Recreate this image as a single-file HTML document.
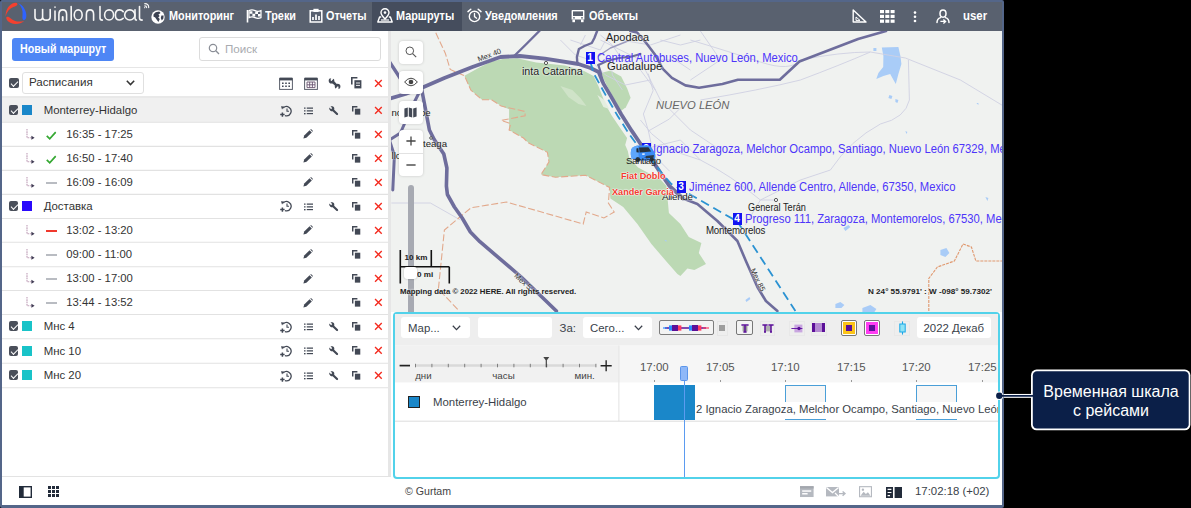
<!DOCTYPE html>
<html lang="ru">
<head>
<meta charset="utf-8">
<title>Wialon Local - Маршруты</title>
<style>
*{box-sizing:border-box;margin:0;padding:0}
html,body{width:1191px;height:508px;overflow:hidden;background:#000;font-family:"Liberation Sans",sans-serif;}
#stage{position:absolute;left:0;top:0;width:1191px;height:508px;overflow:hidden;background:#000}
#win{position:absolute;left:0;top:0;width:1004px;height:508px;border:2px solid #546689;border-bottom-width:3px;border-radius:2px;background:#fff;overflow:hidden}
/* inner coordinates are relative to #in which is placed so that its origin equals page origin */
#in{position:absolute;left:-2px;top:-2px;width:1004px;height:508px}
.a{position:absolute}
.t{position:absolute;white-space:nowrap;font-size:12px;line-height:14px;color:#333;transform-origin:0 50%}
.b{font-weight:bold}
svg{position:absolute;overflow:visible}
/* top bar */
#top{left:0;top:0;width:1004px;height:31px;background:#59616f}
#top .t{color:#fff;font-weight:bold;top:9px}
#tabact{left:372px;top:0;width:90px;height:31px;background:#454d5d}
/* left panel */
#lp{left:0;top:31px;width:388px;height:446px;background:#fff}
.row{position:absolute;left:0;width:388px;border-top:1px solid #e4e4e4}
.cb{position:absolute;width:11px;height:11px;border-radius:2px;background:#4a4f5a}
.cb:after{content:"";position:absolute;left:2.2px;top:3px;width:6px;height:3px;border-left:1.6px solid #fff;border-bottom:1.6px solid #fff;transform:rotate(-45deg);transform-origin:50% 50%}
.sq{position:absolute;width:11px;height:11px}
</style>
</head>
<body>
<div id="stage">
<div id="win"><div id="in">

<!-- TOPBAR -->
<div id="top" class="a">
  <div id="tabact" class="a"></div>
  <!-- logo mark -->
  <svg style="left:0;top:0" width="32" height="30" viewBox="0 0 32 30">
    <path d="M17.3 3.8 C16.8 2.3 14.6 2.4 12.4 3.5 C8.2 5.7 5.2 10.8 5.7 16.8 C6.4 12.3 9.4 8.6 13.4 7 C15.6 6.3 17.9 5.5 17.3 3.8 Z" fill="#f4402f"/>
    <path d="M6.6 17 C7.5 16.3 9.2 16.9 10.8 18.5 C13.8 21.1 18.6 22.6 24.2 20.9 C20.8 24 15 24.9 10.3 22.7 C7.4 21.3 5.5 18.4 6.6 17 Z" fill="#f4402f"/>
    <path d="M24.4 20.1 C25.9 19.7 26.5 17.4 26.3 14.6 C25.9 9.9 22.8 5.3 18.2 3.1 C21.6 6.6 23.1 10.6 22.5 15.4 C22.1 17.8 22.6 20.5 24.4 20.1 Z" fill="#2f63ff"/>
  </svg>
  <!-- logo text: wialon local -->
  <svg style="left:30px;top:2px" width="125" height="24" viewBox="30 2 125 24" fill="none" stroke="#f6f6f6" stroke-width="1.6" stroke-linecap="round" stroke-linejoin="round">
    <path d="M35 9.6 V17 Q35 20.1 38.8 20.1 Q42.6 20.1 42.6 17 V9.6 M42.6 17 Q42.6 20.1 46.4 20.1 Q50.2 20.1 50.2 17 V9.6"/>
    <path d="M55 11 V20.3 M55 7.1 V7.3"/>
    <path d="M58.9 20.3 V14.5 Q58.9 9.85 62.8 9.85 Q66.6 9.85 66.6 14.5 V20.3"/><path d="M62.7 17 V20.3" stroke-width="1.9"/>
    <path d="M71.2 6.5 V20.3"/>
    <ellipse cx="78.2" cy="14.95" rx="3.95" ry="5.1"/>
    <path d="M86.4 20.3 V14.3 Q86.4 9.85 90 9.85 Q93.6 9.85 93.6 14.3 V20.3"/>
    <path d="M100 6.5 V18 Q100 20.1 102.4 20.1"/>
    <ellipse cx="109.1" cy="14.95" rx="4.5" ry="5.1"/>
    <path d="M123.2 11.6 Q121.6 9.85 119.6 9.85 Q115.4 9.85 115.4 14.95 Q115.4 20.05 119.6 20.05 Q121.6 20.05 123.2 18.3"/>
    <ellipse cx="129.8" cy="14.95" rx="5.1" ry="5.1"/><path d="M135 9.8 V18.3 Q135 20.1 136.4 20.1"/>
    <path d="M139.5 6.5 V18 Q139.5 20.1 142.2 20.1"/>
    <path d="M144.8 3.7 Q148.7 3.7 148.7 7.6 M144.8 5.9 Q146.6 5.9 146.6 7.6 M144.7 7.5 V7.7" stroke-width="1.2"/>
  </svg>
  <!-- globe -->
  <svg style="left:150.5px;top:9.5px" width="14" height="14" viewBox="0 0 14 14">
    <circle cx="7" cy="7" r="6.7" fill="#fff"/>
    <path d="M4.6 2.2 L8.2 1.4 L9.6 3 L7.4 4.4 L8.6 6 L7.2 7.6 L8.8 9 L7.4 12 L5.6 9.4 L4.2 7.6 L2.4 6.4 L2.6 4.2 Z M10.4 5.4 L12.6 5.6 L12.4 8.6 L10.8 10.4 L9.8 8 Z" fill="#3b4252"/>
  </svg>
  <div class="t" style="left:168.5px;transform:scaleX(.905)">Мониторинг</div>
  <!-- flag -->
  <svg style="left:246px;top:9px" width="16" height="14" viewBox="0 0 16 14">
    <path d="M1.5 1 V13.5" stroke="#fff" stroke-width="1.6" fill="none"/>
    <path d="M3 1.6 Q6 0.2 9 1.6 T15 1.6 V8.6 Q12 10 9 8.6 T3 8.6 Z" fill="none" stroke="#fff" stroke-width="1.2"/>
    <path d="M3.6 2.2 h2.8 v2.6 h-2.8z M9.2 2.4 h2.8 v2.6 h-2.8z M6.4 4.8 h2.8 v2.6 h-2.8z M12 5 h2.6 v2.6 h-2.6z" fill="#fff"/>
  </svg>
  <div class="t" style="left:265px;transform:scaleX(.905)">Треки</div>
  <!-- report -->
  <svg style="left:309px;top:8px" width="14" height="15" viewBox="0 0 14 15">
    <rect x="1.2" y="2.8" width="11.6" height="11.2" fill="none" stroke="#fff" stroke-width="1.5"/>
    <rect x="4.4" y="0.8" width="5.2" height="3.2" fill="#fff"/>
    <path d="M4 12 V9 M7 12 V6.6 M10 12 V8" stroke="#fff" stroke-width="1.7" fill="none"/>
  </svg>
  <div class="t" style="left:326px;transform:scaleX(.905)">Отчеты</div>
  <!-- routes -->
  <svg style="left:377px;top:8px" width="16" height="15" viewBox="0 0 16 15">
    <path d="M8 0.8 C5.6 0.8 4 2.6 4 4.6 C4 7 8 11 8 11 C8 11 12 7 12 4.6 C12 2.6 10.4 0.8 8 0.8 Z" fill="none" stroke="#fff" stroke-width="1.4"/>
    <circle cx="8" cy="4.6" r="1.3" fill="#fff"/>
    <path d="M4.2 9 L2.6 9 L0.8 14 H15.2 L13.4 9 L11.8 9" fill="none" stroke="#fff" stroke-width="1.4" stroke-linejoin="round"/>
    <path d="M4 12 h8" stroke="#fff" stroke-width="1.2"/>
  </svg>
  <div class="t" style="left:396px;transform:scaleX(.905)">Маршруты</div>
  <!-- alarm clock -->
  <svg style="left:467px;top:8px" width="15" height="15" viewBox="0 0 15 15">
    <circle cx="7.5" cy="8.4" r="5.2" fill="none" stroke="#fff" stroke-width="1.4"/>
    <path d="M7.5 5.4 V8.6 L9.6 10.2" fill="none" stroke="#fff" stroke-width="1.3" stroke-linecap="round"/>
    <path d="M1 3.6 L3.8 1.2 M14 3.6 L11.2 1.2" stroke="#fff" stroke-width="1.5" stroke-linecap="round"/>
  </svg>
  <div class="t" style="left:485px;transform:scaleX(.905)">Уведомления</div>
  <!-- bus -->
  <svg style="left:571px;top:9px" width="14" height="14" viewBox="0 0 14 14">
    <path d="M1.4 1 H12.6 Q13.4 1 13.4 1.8 V10.6 H0.6 V1.8 Q0.6 1 1.4 1 Z" fill="#fff"/>
    <rect x="2" y="2.4" width="10" height="4.6" fill="#59616f"/>
    <rect x="1.4" y="10.6" width="2.6" height="2.6" fill="#fff"/><rect x="10" y="10.6" width="2.6" height="2.6" fill="#fff"/>
    <circle cx="3" cy="8.8" r="0.9" fill="#59616f"/><circle cx="11" cy="8.8" r="0.9" fill="#59616f"/>
  </svg>
  <div class="t" style="left:589px;transform:scaleX(.905)">Объекты</div>
  <!-- right icons -->
  <svg style="left:852px;top:9px" width="15" height="14" viewBox="0 0 15 14">
    <path d="M1.2 1 L14 13 H1.2 Z" fill="none" stroke="#fff" stroke-width="1.4" stroke-linejoin="round"/>
    <path d="M4 8 L8 11.4 H4 Z" fill="none" stroke="#fff" stroke-width="1"/>
  </svg>
  <svg style="left:880px;top:10px" width="15" height="13" viewBox="0 0 15 13" fill="#fff">
    <rect x="0" y="0" width="4" height="3.2"/><rect x="5.3" y="0" width="4" height="3.2"/><rect x="10.6" y="0" width="4" height="3.2"/>
    <rect x="0" y="4.8" width="4" height="3.2"/><rect x="5.3" y="4.8" width="4" height="3.2"/><rect x="10.6" y="4.8" width="4" height="3.2"/>
    <rect x="0" y="9.6" width="4" height="3.2"/><rect x="5.3" y="9.6" width="4" height="3.2"/><rect x="10.6" y="9.6" width="4" height="3.2"/>
  </svg>
  <svg style="left:913px;top:11px" width="4" height="12" viewBox="0 0 4 12" fill="#fff"><circle cx="2" cy="1.6" r="1.3"/><circle cx="2" cy="5.8" r="1.3"/><circle cx="2" cy="10" r="1.3"/></svg>
  <svg style="left:935px;top:9px" width="16" height="15" viewBox="0 0 16 15">
    <ellipse cx="8" cy="4.6" rx="3" ry="3.6" fill="none" stroke="#fff" stroke-width="1.5"/>
    <path d="M2 13.6 Q2 9.6 5.6 8.6 M14 13.6 Q14 9.6 10.4 8.6" fill="none" stroke="#fff" stroke-width="1.5" stroke-linecap="round"/>
    <path d="M5.4 12.4 H10 M8.4 10.4 L10.6 12.4 L8.4 14.4" fill="none" stroke="#fff" stroke-width="1.3"/>
  </svg>
  <div class="t" style="left:963px;transform:scaleX(.95)">user</div>
</div>

<!-- LEFT PANEL -->
<svg width="0" height="0" style="position:absolute">
<defs>
<symbol id="i-x" viewBox="0 0 10 10"><path d="M1.2 1.2 L8.8 8.8 M8.8 1.2 L1.2 8.8" stroke="#f42c20" stroke-width="1.6" fill="none"/></symbol>
<symbol id="i-copy" viewBox="0 0 10 10"><path d="M0.8 6.2 V0.8 H6" fill="none" stroke="#434955" stroke-width="1.6"/><rect x="3.2" y="3" width="6" height="6.6" fill="#434955"/></symbol>
<symbol id="i-wr" viewBox="0 0 10 10"><path d="M9.2 7.6 L5.4 3.8 C5.8 2.6 5.4 1.3 4.2 0.6 C3.4 0.1 2.4 0.1 1.6 0.4 L3.4 2.2 L2.2 3.4 L0.4 1.6 C0.1 2.6 0.3 3.8 1.2 4.6 C2 5.4 3 5.6 3.8 5.4 L7.6 9.2 C8.1 9.7 8.8 9.7 9.2 9.2 C9.7 8.8 9.7 8.1 9.2 7.6 Z" fill="#434955"/></symbol>
<symbol id="i-list" viewBox="0 0 11 9"><path d="M3.4 1.1 H11 M3.4 4.5 H11 M3.4 7.9 H11" stroke="#434955" stroke-width="1.5" fill="none"/><path d="M0 1.1 H1.9 M0 4.5 H1.9 M0 7.9 H1.9" stroke="#434955" stroke-width="1.7" fill="none"/></symbol>
<symbol id="i-clk" viewBox="0 0 12 12"><path d="M3.2 3 A4.6 4.6 0 1 1 5 10.6" fill="none" stroke="#434955" stroke-width="1.25"/><path d="M7 3.4 V6.2 H9" fill="none" stroke="#434955" stroke-width="1.1"/><path d="M1 1.2 L4.2 1.6 L2 4.4 Z" fill="#434955"/><path d="M2.4 7.4 V11.8 M0.2 9.6 H4.6" stroke="#434955" stroke-width="1.5" fill="none"/></symbol>
<symbol id="i-pen" viewBox="0 0 10 10"><path d="M0.4 9.6 L1.2 6.6 L6.6 1.2 L8.8 3.4 L3.4 8.8 Z" fill="#434955"/><path d="M7.3 0.6 L8 0 L10 2 L9.4 2.7 Z" fill="#434955"/></symbol>
<symbol id="i-arr" viewBox="0 0 9 11"><path d="M1 0 V8.7 H6.4" fill="none" stroke="#c2a3bb" stroke-width="1.15" stroke-dasharray="1.6 0.7"/><path d="M5.4 6.7 L8.6 8.7 L5.4 10.7 Z" fill="#3f3a52"/></symbol>
<symbol id="i-chk" viewBox="0 0 11 9"><path d="M0.8 4.8 L3.9 7.9 L10.2 0.9" fill="none" stroke="#35a832" stroke-width="1.8"/></symbol>
<symbol id="i-cal1" viewBox="0 0 14 13"><rect x="0.6" y="1.6" width="12.8" height="10.8" fill="#fff" stroke="#5a5f6b" stroke-width="1"/><rect x="0.6" y="0.6" width="12.8" height="2.8" fill="#434955"/><path d="M3 5.6h1.6v1.4H3z M6.2 5.6h1.6v1.4H6.2z M9.4 5.6h1.6v1.4H9.4z M3 8.6h1.6v1.4H3z M6.2 8.6h1.6v1.4H6.2z M9.4 8.6h1.6v1.4H9.4z" fill="#434955"/></symbol>
<symbol id="i-cal2" viewBox="0 0 14 13"><rect x="0.6" y="1.6" width="12.8" height="10.8" fill="#fff" stroke="#5a5f6b" stroke-width="1"/><rect x="0.6" y="0.6" width="12.8" height="2.8" fill="#434955"/><path d="M3 5 H11 V10.6 H3 Z M3 7.8 H11 M5.7 5 V10.6 M8.4 5 V10.6" fill="none" stroke="#6a5570" stroke-width="0.9"/></symbol>
<symbol id="i-wr2" viewBox="0 0 13 13"><path d="M4 4 L9.2 9.2" stroke="#434955" stroke-width="2.5" fill="none"/><circle cx="3.5" cy="3.7" r="2.8" fill="#434955"/><path d="M3.3 3.4 L3.2 -0.5 L6.2 0.2 Z" fill="#fff" stroke="#fff" stroke-width="1.1" stroke-linejoin="round"/><circle cx="9.6" cy="9.5" r="2.8" fill="#434955"/><path d="M9.9 9.8 L10 13.6 L7 13 Z" fill="#fff" stroke="#fff" stroke-width="1.1" stroke-linejoin="round"/></symbol>
<symbol id="i-copy2" viewBox="0 0 11 12"><path d="M0.8 7.4 V0.8 H6.4" fill="none" stroke="#434955" stroke-width="1.6"/><rect x="3.4" y="3.2" width="7" height="8.2" fill="#434955"/><path d="M5 6 H9 M5 8.4 H9" stroke="#fff" stroke-width="0.9"/></symbol>
</defs></svg>
<div id="lp" class="a"></div>
<div class="a" style="left:12px;top:38px;width:102px;height:22.5px;background:#4e86f5;border-radius:3px"></div>
<div class="t b" style="left:20px;top:42px;color:#fff;transform:scaleX(.89)">Новый маршрут</div>
<div class="a" style="left:199px;top:37px;width:181.5px;height:24px;border:1px solid #dcdcdc;border-radius:3px;background:#fff"></div>
<svg style="left:208px;top:43px" width="12" height="12" viewBox="0 0 12 12"><circle cx="5" cy="5" r="3.7" fill="none" stroke="#8a8e96" stroke-width="1.2"/><path d="M7.8 7.8 L11 11" stroke="#8a8e96" stroke-width="1.3"/></svg>
<div class="t" style="left:225px;top:42px;color:#a9abb0;font-size:11.6px">Поиск</div>
<div class="a" style="left:0;top:66.8px;width:388px;height:1px;background:#e6e6e6"></div>
<div class="cb" style="left:8.5px;top:77.5px;width:10px;height:10px"></div>
<div class="a" style="left:22px;top:72px;width:121.7px;height:21.6px;border:1px solid #e0e0e0;border-radius:3px;background:#fff"></div>
<div class="t" style="left:29px;top:75.3px;font-size:11.6px">Расписания</div>
<svg style="left:125.5px;top:79.5px" width="9" height="6" viewBox="0 0 9 6"><path d="M0.8 0.8 L4.5 4.6 L8.2 0.8" fill="none" stroke="#333" stroke-width="1.5"/></svg>
<svg style="left:279px;top:76.5px" width="14" height="13"><use href="#i-cal1"/></svg>
<svg style="left:303.5px;top:76.5px" width="14" height="13"><use href="#i-cal2"/></svg>
<svg style="left:328px;top:76.5px" width="13" height="13"><use href="#i-wr2"/></svg>
<svg style="left:351.3px;top:77px" width="11" height="12"><use href="#i-copy2"/></svg>
<svg style="left:373.6px;top:78.5px" width="8.8" height="8.8"><use href="#i-x"/></svg>
<svg style="left:0;top:0" width="388" height="400" viewBox="0 0 388 400"><rect x="0" y="96.9" width="388" height="25.3" fill="#f0f0f0"/><path d="M0 96.9 H388" stroke="#e2e2e2" stroke-width="1.1"/><path d="M0 122.2 H388" stroke="#e2e2e2" stroke-width="1.1"/><path d="M0 146.4 H388" stroke="#e2e2e2" stroke-width="1.1"/><path d="M0 170.4 H388" stroke="#e2e2e2" stroke-width="1.1"/><path d="M0 194.4 H388" stroke="#e2e2e2" stroke-width="1.1"/><path d="M0 218.5 H388" stroke="#e2e2e2" stroke-width="1.1"/><path d="M0 242.2 H388" stroke="#e2e2e2" stroke-width="1.1"/><path d="M0 266.7 H388" stroke="#e2e2e2" stroke-width="1.1"/><path d="M0 290.5 H388" stroke="#e2e2e2" stroke-width="1.1"/><path d="M0 314.5 H388" stroke="#e2e2e2" stroke-width="1.1"/><path d="M0 338.8 H388" stroke="#e2e2e2" stroke-width="1.1"/><path d="M0 363.3 H388" stroke="#e2e2e2" stroke-width="1.1"/><path d="M0 387.7 H388" stroke="#e2e2e2" stroke-width="1.1"/></svg>
<div class="cb" style="left:8.5px;top:105.4px;width:9.8px;height:9.8px"></div>
<div class="sq" style="left:22.3px;top:105.4px;width:10.2px;height:9.8px;background:#1a87c9"></div>
<div class="t" style="left:43.7px;top:103px;font-size:11.4px">Monterrey-Hidalgo</div>
<svg style="left:280.3px;top:104.5px" width="12" height="12"><use href="#i-clk"/></svg>
<svg style="left:304.4px;top:106.6px" width="9" height="7.8"><use href="#i-list"/></svg>
<svg style="left:329.2px;top:105.7px" width="9.6" height="9.6"><use href="#i-wr"/></svg>
<svg style="left:352px;top:105.9px" width="9" height="9"><use href="#i-copy"/></svg>
<svg style="left:373.6px;top:105.9px" width="8.8" height="8.8"><use href="#i-x"/></svg>
<svg style="left:26px;top:128.8px" width="9" height="11"><use href="#i-arr"/></svg>
<svg style="left:46.2px;top:130.7px" width="10.5" height="9"><use href="#i-chk"/></svg>
<div class="t" style="left:66.3px;top:126.5px;font-size:11.3px">16:35 - 17:25</div>
<svg style="left:303px;top:129.3px" width="10" height="10"><use href="#i-pen"/></svg>
<svg style="left:352px;top:129.7px" width="9" height="9"><use href="#i-copy"/></svg>
<svg style="left:373.6px;top:129.7px" width="8.8" height="8.8"><use href="#i-x"/></svg>
<svg style="left:26px;top:152.9px" width="9" height="11"><use href="#i-arr"/></svg>
<svg style="left:46.2px;top:154.8px" width="10.5" height="9"><use href="#i-chk"/></svg>
<div class="t" style="left:66.3px;top:150.6px;font-size:11.3px">16:50 - 17:40</div>
<svg style="left:303px;top:153.4px" width="10" height="10"><use href="#i-pen"/></svg>
<svg style="left:352px;top:153.8px" width="9" height="9"><use href="#i-copy"/></svg>
<svg style="left:373.6px;top:153.8px" width="8.8" height="8.8"><use href="#i-x"/></svg>
<svg style="left:26px;top:176.9px" width="9" height="11"><use href="#i-arr"/></svg>
<div class="a" style="left:46.2px;top:181.7px;width:10.6px;height:2.2px;background:#b9bcc2"></div>
<div class="t" style="left:66.3px;top:174.6px;font-size:11.3px">16:09 - 16:09</div>
<svg style="left:303px;top:177.4px" width="10" height="10"><use href="#i-pen"/></svg>
<svg style="left:352px;top:177.8px" width="9" height="9"><use href="#i-copy"/></svg>
<svg style="left:373.6px;top:177.8px" width="8.8" height="8.8"><use href="#i-x"/></svg>
<div class="cb" style="left:8.5px;top:201.2px;width:9.8px;height:9.8px"></div>
<div class="sq" style="left:22.3px;top:201.2px;width:10.2px;height:9.8px;background:#2a0afc"></div>
<div class="t" style="left:43.7px;top:198.9px;font-size:11.4px">Доставка</div>
<svg style="left:280.3px;top:200.4px" width="12" height="12"><use href="#i-clk"/></svg>
<svg style="left:304.4px;top:202.5px" width="9" height="7.8"><use href="#i-list"/></svg>
<svg style="left:329.2px;top:201.6px" width="9.6" height="9.6"><use href="#i-wr"/></svg>
<svg style="left:352px;top:201.8px" width="9" height="9"><use href="#i-copy"/></svg>
<svg style="left:373.6px;top:201.8px" width="8.8" height="8.8"><use href="#i-x"/></svg>
<svg style="left:26px;top:224.8px" width="9" height="11"><use href="#i-arr"/></svg>
<div class="a" style="left:46.2px;top:229.7px;width:10.6px;height:2.2px;background:#f0392d"></div>
<div class="t" style="left:66.3px;top:222.5px;font-size:11.3px">13:02 - 13:20</div>
<svg style="left:303px;top:225.3px" width="10" height="10"><use href="#i-pen"/></svg>
<svg style="left:352px;top:225.8px" width="9" height="9"><use href="#i-copy"/></svg>
<svg style="left:373.6px;top:225.8px" width="8.8" height="8.8"><use href="#i-x"/></svg>
<svg style="left:26px;top:248.9px" width="9" height="11"><use href="#i-arr"/></svg>
<div class="a" style="left:46.2px;top:253.8px;width:10.6px;height:2.2px;background:#b9bcc2"></div>
<div class="t" style="left:66.3px;top:246.6px;font-size:11.3px">09:00 - 11:00</div>
<svg style="left:303px;top:249.4px" width="10" height="10"><use href="#i-pen"/></svg>
<svg style="left:352px;top:249.8px" width="9" height="9"><use href="#i-copy"/></svg>
<svg style="left:373.6px;top:249.8px" width="8.8" height="8.8"><use href="#i-x"/></svg>
<svg style="left:26px;top:273.1px" width="9" height="11"><use href="#i-arr"/></svg>
<div class="a" style="left:46.2px;top:277.9px;width:10.6px;height:2.2px;background:#b9bcc2"></div>
<div class="t" style="left:66.3px;top:270.8px;font-size:11.3px">13:00 - 17:00</div>
<svg style="left:303px;top:273.6px" width="10" height="10"><use href="#i-pen"/></svg>
<svg style="left:352px;top:274.0px" width="9" height="9"><use href="#i-copy"/></svg>
<svg style="left:373.6px;top:274.0px" width="8.8" height="8.8"><use href="#i-x"/></svg>
<svg style="left:26px;top:297.0px" width="9" height="11"><use href="#i-arr"/></svg>
<div class="a" style="left:46.2px;top:301.8px;width:10.6px;height:2.2px;background:#b9bcc2"></div>
<div class="t" style="left:66.3px;top:294.7px;font-size:11.3px">13:44 - 13:52</div>
<svg style="left:303px;top:297.5px" width="10" height="10"><use href="#i-pen"/></svg>
<svg style="left:352px;top:297.9px" width="9" height="9"><use href="#i-copy"/></svg>
<svg style="left:373.6px;top:297.9px" width="8.8" height="8.8"><use href="#i-x"/></svg>
<div class="cb" style="left:8.5px;top:321.4px;width:9.8px;height:9.8px"></div>
<div class="sq" style="left:22.3px;top:321.4px;width:10.2px;height:9.8px;background:#19c3c8"></div>
<div class="t" style="left:43.7px;top:319.1px;font-size:11.4px">Мнс 4</div>
<svg style="left:280.3px;top:320.6px" width="12" height="12"><use href="#i-clk"/></svg>
<svg style="left:304.4px;top:322.8px" width="9" height="7.8"><use href="#i-list"/></svg>
<svg style="left:329.2px;top:321.8px" width="9.6" height="9.6"><use href="#i-wr"/></svg>
<svg style="left:352px;top:322.0px" width="9" height="9"><use href="#i-copy"/></svg>
<svg style="left:373.6px;top:322.0px" width="8.8" height="8.8"><use href="#i-x"/></svg>
<div class="cb" style="left:8.5px;top:345.9px;width:9.8px;height:9.8px"></div>
<div class="sq" style="left:22.3px;top:345.9px;width:10.2px;height:9.8px;background:#19c3c8"></div>
<div class="t" style="left:43.7px;top:343.6px;font-size:11.4px">Мнс 10</div>
<svg style="left:280.3px;top:345.1px" width="12" height="12"><use href="#i-clk"/></svg>
<svg style="left:304.4px;top:347.2px" width="9" height="7.8"><use href="#i-list"/></svg>
<svg style="left:329.2px;top:346.2px" width="9.6" height="9.6"><use href="#i-wr"/></svg>
<svg style="left:352px;top:346.4px" width="9" height="9"><use href="#i-copy"/></svg>
<svg style="left:373.6px;top:346.4px" width="8.8" height="8.8"><use href="#i-x"/></svg>
<div class="cb" style="left:8.5px;top:370.3px;width:9.8px;height:9.8px"></div>
<div class="sq" style="left:22.3px;top:370.3px;width:10.2px;height:9.8px;background:#19c3c8"></div>
<div class="t" style="left:43.7px;top:368.0px;font-size:11.4px">Мнс 20</div>
<svg style="left:280.3px;top:369.5px" width="12" height="12"><use href="#i-clk"/></svg>
<svg style="left:304.4px;top:371.6px" width="9" height="7.8"><use href="#i-list"/></svg>
<svg style="left:329.2px;top:370.7px" width="9.6" height="9.6"><use href="#i-wr"/></svg>
<svg style="left:352px;top:370.9px" width="9" height="9"><use href="#i-copy"/></svg>
<svg style="left:373.6px;top:370.9px" width="8.8" height="8.8"><use href="#i-x"/></svg>
<div class="a" style="left:388px;top:31px;width:2.6px;height:446px;background:#e6e6e6"></div>

<!-- MAP -->
<div id="map" class="a" style="left:390.6px;top:31px;width:613px;height:281px;background:#f0f2f0;overflow:hidden">
<svg style="left:0;top:0" width="613" height="281" viewBox="390.6 31 613 281">
  <!-- green areas -->
  <path d="M464.1 75.8 L478 68 L491.2 61.5 L502.4 58.9 L516.7 58.3 L535.8 62.4 L564.5 65.6 L583.6 71 L593.2 76 L598 86 L605.4 104.9 L611.3 115.5 L618.4 126.1 L626.7 138 L624.8 145 L627.4 151 L628.8 157.7 L637.7 167.4 L648 173 L657 176 L666 186 L668.5 213 L680 224 L688.4 237 L701 243 L698.4 253 L705.6 264 L694 270 L687 268.5 L680 276 L677 274 L665.6 261 L651 244 L637 224 L622.8 207 L610 198.5 L609.2 187.4 L585.2 175.3 L555 177.2 L540.6 174.6 L548.6 161.9 L547 152.3 L527.9 142.8 L523.1 138 L508.7 130 L508.7 109.3 L500.8 106.1 L491.2 99.7 L481.6 99.7 L470.5 90.2 Z" fill="#bcd9b4"/>
  <path d="M600.7 73 L610 70.6 L620.8 76.5 L626.7 88.3 L630.2 97.8 L625.5 107.2 L620.8 110.8 L613.7 99 L605.4 83.6 Z" fill="#bcd9b4"/>
  <path d="M560 86 L572 90 L580 98 L586 106 L578 104 L568 97 Z" fill="#cfe3c8"/>
  <path d="M597 95 L604 100 L609 109 L603 107 Z" fill="#e4eee0"/>
  <!-- water -->
  <path d="M881.4 47.6 L898 47 L900 56 L901 64 L898 74 L895.4 84 L892 78 L889.8 74 L883 76 L875.9 79 L878 73 L882.8 67 L883 56 Z" fill="#a9ccf7"/>
  <path d="M889 95 l3 1 l-1 3 l-3 -1z M895 99 l3 1 l-1 3 l-2 -1z M873 48 l3 0 l0 3 l-3 0z M905 131 l2 1 l-1 2z M976 103 l2 0 l0 2z" fill="#a9ccf7"/>
  <path d="M940 250 l6 -2 l3 5 l-4 4 l-5 -2z M843 228 l5 -3 l2 2 l-5 4z M664 240 l2 0 l0 2z M745 300 l4 -3 l1 2 l-4 3z M985 197 l3 1 l-1 3z M835 304 l5 -2 l4 3 l-3 3 l-6 0z M862 308 l8 -3 l6 4 l-2 3 l-12 0z" fill="#a9ccf7"/>
  <!-- thin roads -->
  <g fill="none" stroke="#cfd0e2" stroke-width="0.9">
    <path d="M690 40 Q730 52 760 62 T800 60 Q840 52 870 52 L905 58 L960 80 L1003 106"/>
    <path d="M700 100 Q760 90 800 80 Q840 65 870 52"/>
    <path d="M908 60 L909 100 Q905 118 880 124 Q850 140 830 170"/>
    <path d="M640 120 Q660 150 700 160 Q730 175 760 200 L775 200"/>
    <path d="M700 31 L720 60 L690 80"/>
    <path d="M600 40 L640 60 L660 100 L690 130 L720 150"/>
    <path d="M760 200 L800 180 L830 170"/>
    <path d="M760 200 L745 225"/>
    <path d="M391 203 L430 203 L460 220"/>
    <path d="M620 40 L650 45 L680 35"/>
    <path d="M570 40 L600 50 L610 31"/><path d="M560 40 L575 55 L590 60 L605 75 L625 85 L650 80"/><path d="M600 35 L612 45 L622 60 L640 70 L655 90"/><path d="M585 35 L580 45 M610 60 L612 75 L622 90 M660 40 L680 45 L700 40 M655 60 L675 60 L690 70"/>
    <path d="M640 150 L680 140 L700 160"/>
  </g>
  <!-- state boundary -->
  <g fill="none" stroke="#e2a98c" stroke-width="1.1" stroke-dasharray="7 2.5">
    <path d="M435.4 32.8 L445 53.5 L449.8 69.4 L464.1 75.8 L470.5 90.2 L481.6 99.7 L491.2 99.7 L500.8 106.1 L524.7 111.5 L524.7 115.7 L500.8 120.4 L510.3 123.6 L508.7 130 L523.1 138 L527.9 142.8 L547 152.3 L548.6 161.9 L540.6 174.6 L555 177.2 L585.2 175.3 L609.2 187.4 L608 203 L613.8 212 L603.5 218 L585.8 212 L582.8 224 L506 202 L470.6 207.8 L444 230 L438 289 L458.8 311"/>
  </g>
  <path d="M928.4 311 L928.4 278.5 L937 267 L954 261 L962.6 244 L971 247 L975.5 261 L1003 261" fill="none" stroke="#e0986e" stroke-width="1.1" stroke-dasharray="3 1"/>
  <!-- main roads -->
  <g fill="none" stroke="#6e6d9c" stroke-width="3" stroke-linejoin="round" stroke-linecap="round">
    <path d="M388 99 L405 94 L421 88 L444 78 L472 67 L500 57 L519.4 56 L544.5 58.7 L578 64 L590 68 L598.3 72 L603 83.6 L610 95.4 L620.8 114.3 L631.4 130.9 L640.9 145 L652.7 161.6 L662 175.8 L669 186 L682.7 198.5" stroke-width="3.8"/>
    <path d="M682.7 198.5 L697 204 L717 221 L737 241 L745.5 261 L757 287 L765.5 301 L777 311" stroke-width="2.6"/>
    <path d="M539 31 L526 44 L513.8 56" stroke-width="2.4"/>
    <path d="M596.7 31 L594 38 L591.4 43 L584 46 L578.5 49 L576.5 57 L577 64" stroke-width="2.4"/><path d="M598 65 L606.5 61 L618.6 58 L630.7 56.7 L640 54" stroke-width="2.2"/><path d="M598 65 L600.5 73 L601.5 82" stroke-width="2.2"/>
    <path d="M630 31 L636.7 32.5 L645.8 43 L654.9 55 L662.4 68.8 L671.5 77.9 L685 85.4 L698.7 87.7 L722 84 L737.5 79.7 L779.4 79.7 L799 61.5 L857.7 39 L885.6 31" stroke-width="2.6"/><path d="M598 56 L610 48 L625 42 L637 37" stroke-width="1.4" stroke="#9a99bd"/>
    
    <path d="M388 60 L400.3 79 L421 88" stroke-width="3.4"/>
    <path d="M421 88 L424.2 104.5 L429 130 L433.8 139.5 L443.4 154 L446.5 168 L446 186 L447 194.5 L454 207 L461.8 218 L470 232 L479.5 241.7 L520.8 277 L556 311" stroke-width="3.6"/>
    <path d="M421 88 L411 108 L400 133 L389 140 L394 155.5 L392.4 190" stroke-width="3"/>
    <path d="M648 74 L652.7 90.7 L643 114 L648 131 L650 140 L652.7 154.5 L669 171" stroke-width="0.9" stroke="#cfd0e2"/><path d="M648 131 L669 119 L681 107" stroke-width="0.9" stroke="#cfd0e2"/>
  </g>
  <!-- route dashed -->
  <path d="M590 62 L593.6 74 L605.4 95.4 L617 115.5 L629 134.4 L638.5 147.4 L648 155 L662 174 L671 184 L681 189.5 L737 221.5 L795 311" fill="none" stroke="#2a92d2" stroke-width="1.8" stroke-dasharray="9 5"/>
</svg>
</div>


<div id="mapov" class="a" style="left:0;top:31px;width:1003px;height:281px;overflow:hidden"><div class="a" style="left:0;top:-31px">
<style>.ml{text-shadow:0 0 2px #f0f2f0,0 0 2px #f0f2f0}.rt{color:#4d35fa;font-size:12.3px;transform:scaleX(.915);text-shadow:none}.mk{position:absolute;width:9.4px;height:11.8px;background:#1212f2;color:#fff;font-weight:bold;font-size:10.2px;line-height:11.8px;text-align:center;margin:.3px 0 0 .5px}.mbtn{position:absolute;left:398.5px;width:24px;background:#fff;border-radius:4px;box-shadow:0 0 3px rgba(0,0,0,.18)}</style>
<div class="t ml" style="left:606px;top:30.200000000000003px;font-size:10.9px;color:#222;">Apodaca</div>
<div class="t ml" style="left:607px;top:59.2px;font-size:11.3px;color:#222;">Guadalupe</div>
<div class="t ml" style="left:522px;top:64.4px;font-size:10.7px;color:#222;">inta Catarina</div>
<div class="t ml" style="left:656px;top:97.5px;font-size:11.2px;color:#666;font-style:italic;">NUEVO LEÓN</div>
<div class="t ml" style="left:626px;top:154px;font-size:9.6px;color:#222;letter-spacing:-0.4px;z-index:6;text-shadow:none">Santiago</div>
<div class="t ml" style="left:662px;top:189.5px;font-size:9.8px;color:#222;letter-spacing:-0.3px;">Allende</div>
<div class="t ml" style="left:748px;top:201.1px;font-size:10.2px;color:#222;transform:scaleX(.9);">General Terán</div>
<div class="t ml" style="left:706px;top:223.6px;font-size:10.2px;color:#222;letter-spacing:-0.2px;transform:scaleX(.95);">Montemorelos</div>
<div class="t ml" style="left:423px;top:136.5px;font-size:9.6px;color:#222;">teaga</div>
<div class="t ml" style="left:391.5px;top:106px;font-size:9.6px;color:#222;">nos</div>
<div class="t ml" style="left:420px;top:106px;font-size:9.6px;color:#222;">pe</div>
<div class="t ml" style="left:391.5px;top:149px;font-size:9.6px;color:#222;">llo</div>
<div class="t ml" style="left:478px;top:52.5px;font-size:7.5px;color:#333;transform:rotate(-21deg);transform-origin:0 50%">Mex 40</div>
<div class="t ml" style="left:752px;top:262px;font-size:7.5px;color:#333;transform:rotate(64deg);transform-origin:0 50%">Mex 85</div>
<div class="t ml" style="left:515px;top:268px;font-size:7.5px;color:#333;transform:rotate(42deg);transform-origin:0 50%">Mex 5</div>
<svg style="left:391px;top:31px" width="612" height="281" viewBox="391 31 612 281"><g fill="#fff" stroke="#444" stroke-width="0.9"><circle cx="546" cy="63" r="1.6"/><circle cx="776" cy="200" r="1.6"/><circle cx="431" cy="138" r="1.3"/></g></svg>
<div class="mk" style="left:585px;top:52px">1</div>
<div class="t rt" style="left:597px;top:51px">Central Autobuses, Nuevo León, Mexico</div>
<div class="mk" style="left:641px;top:143px">2</div>
<div class="t rt" style="left:652.5px;top:142px">Ignacio Zaragoza, Melchor Ocampo, Santiago, Nuevo León 67329, Mexico</div>
<div class="mk" style="left:676px;top:181px">3</div>
<div class="t rt" style="left:689px;top:180px">Jiménez 600, Allende Centro, Allende, 67350, Mexico</div>
<div class="mk" style="left:732px;top:213px">4</div>
<div class="t rt" style="left:745px;top:212px">Progreso 111, Zaragoza, Montemorelos, 67530, Mexico</div>
<svg style="left:629px;top:143px" width="28" height="20" viewBox="0 0 28 20"><path d="M2 8 C2 5 5 3.2 9 2.6 L18 2.2 C20 2.2 21.5 3 22.5 4.6 L25.6 9.4 C26.4 10.6 26.6 12 26.4 13.6 L26 16.4 L22 17.8 L8 17.4 L3 15.6 C1.6 13 1.6 10.4 2 8 Z" fill="#3a8bf4"/><path d="M2 8 C2 5 5 3.2 9 2.6 L9.8 15.4 L3 15.6 C1.6 13 1.6 10.4 2 8 Z" fill="#5ea6fb"/><path d="M10 4.6 L19.4 4.2 L22.2 8.6 L10.6 9.5 Z" fill="#27323d"/><path d="M7.4 5.4 L9.3 4.9 L9.8 9.5 L7.5 9.2 Z" fill="#1f2a35"/><path d="M16.6 13 L24.9 12.1 L24.7 14.6 L17 15.5 Z" fill="#2b3a47"/><ellipse cx="8.8" cy="16.6" rx="2.4" ry="2.5" fill="#26323c"/><ellipse cx="22.8" cy="16.3" rx="2" ry="2.4" fill="#26323c"/><path d="M13 10.6 L15.6 10.3 L15.8 11.8 L13.4 12 Z" fill="#e8f1ff"/></svg>
<div class="t b" style="left:621px;top:169px;font-size:9.8px;color:#f23a30;text-shadow:0 0 1.5px #fff,0 0 1.5px #fff,0 0 1.5px #fff;transform:scaleX(.93)">Fiat Doblo</div>
<div class="t b" style="left:612px;top:185px;font-size:9.8px;color:#f23a30;text-shadow:0 0 1.5px #fff,0 0 1.5px #fff,0 0 1.5px #fff;transform:scaleX(.93)">Xander Garcia</div>
<div class="a" style="left:407.5px;top:185px;width:6px;height:127px;background:#a7aab2;border-radius:3px 3px 0 0"></div>
<div class="a" style="left:403.5px;top:266.5px;width:13.5px;height:12.5px;background:#fff;border-radius:3px;box-shadow:0 0 2px rgba(0,0,0,.3);z-index:5"></div>
<div class="mbtn" style="top:40.5px;height:23.5px"></div>
<svg style="left:404.5px;top:46px" width="12" height="12" viewBox="0 0 12 12"><circle cx="4.8" cy="4.8" r="3.8" fill="none" stroke="#555" stroke-width="1"/><path d="M7.6 7.6 L11.2 11.2" stroke="#555" stroke-width="1.1"/></svg>
<div class="mbtn" style="top:70.5px;height:23.5px"></div>
<svg style="left:403.5px;top:77px" width="14" height="10" viewBox="0 0 14 10"><path d="M0.6 5 Q7 -2.6 13.4 5 Q7 12.6 0.6 5 Z" fill="none" stroke="#444" stroke-width="1"/><circle cx="7" cy="5" r="2.3" fill="#444"/></svg>
<div class="mbtn" style="top:100.5px;height:23px"></div>
<svg style="left:404px;top:106.5px" width="13" height="11" viewBox="0 0 13 11"><path d="M0.4 1.6 L3.8 0.4 V9.4 L0.4 10.6 Z M4.8 0.4 L8.2 1.6 V10.6 L4.8 9.4 Z M9.2 1.6 L12.6 0.4 V9.4 L9.2 10.6 Z" fill="#434955"/></svg>
<div class="mbtn" style="top:130px;height:46px"></div>
<div class="a" style="left:398.5px;top:152.6px;width:24px;height:1px;background:#e2e2e2"></div>
<svg style="left:405.5px;top:136px" width="10" height="10" viewBox="0 0 10 10"><path d="M5 0.4 V9.6 M0.4 5 H9.6" stroke="#444" stroke-width="1.3"/></svg>
<svg style="left:405.5px;top:163.5px" width="10" height="2" viewBox="0 0 10 2"><path d="M0.4 1 H9.6" stroke="#444" stroke-width="1.4"/></svg>
<svg style="left:391px;top:31px" width="612" height="281" viewBox="391 31 612 281"><path d="M400.3 250 V283.5 M400.3 266.8 H449.3 M431.3 250 V266.8 M449.3 266.8 V283.5" fill="none" stroke="#111" stroke-width="1.6"/></svg>
<div class="t b" style="left:404.5px;top:250.5px;font-size:8.1px;color:#222">10 km</div>
<div class="t b" style="left:412.6px;top:268.3px;font-size:8.1px;color:#222">10 mi</div>
<div class="t b ml" style="left:400px;top:284.5px;font-size:7.8px;color:#222;transform:scaleX(1)">Mapping data © 2022 HERE. All rights reserved.</div>
<div class="t b ml" style="left:868px;top:284.5px;font-size:7.8px;color:#222;transform:scaleX(1.04)">N 24° 55.9791' : W -098° 59.7302'</div>
</div></div>
<!-- TIMELINE -->
<style>.tsel{position:absolute;top:316.6px;height:21.6px;background:#fff;border-radius:3px}.tt{font-size:11.4px;color:#3a3f4a}.tm{font-size:11.8px;color:#555;transform:scaleX(.97)}</style>
<div class="a" style="left:393px;top:312px;width:607px;height:167px;border:2px solid #52d2ea;border-radius:4px;background:#fff;overflow:hidden"></div>
<svg style="left:395px;top:314px" width="603" height="163" viewBox="395 314 603 163">
<rect x="395" y="314" width="603" height="31.6" fill="#eeeeee"/>
<rect x="395" y="345.6" width="223.5" height="36.8" fill="#f1f1f1"/>
<rect x="619" y="345.6" width="379" height="36.8" fill="#f6f6f6"/>
<path d="M618.9 345.6 V421.2" stroke="#e2e2e2" stroke-width="1"/>
<path d="M395 421.2 H998" stroke="#dcdcdc" stroke-width="1"/>
</svg>
<div class="tsel" style="left:401px;width:68.6px"></div>
<div class="t tt" style="left:408px;top:320.5px">Мар...</div>
<svg style="left:452px;top:324.5px" width="9" height="6" viewBox="0 0 9 6"><path d="M0.8 0.8 L4.5 4.6 L8.2 0.8" fill="none" stroke="#3a3f4a" stroke-width="1.3"/></svg>
<div class="tsel" style="left:478px;width:74.4px"></div>
<div class="t tt" style="left:559.5px;top:320.5px">За:</div>
<div class="tsel" style="left:583.2px;width:68.6px"></div>
<div class="t tt" style="left:590px;top:320.5px">Сего...</div>
<svg style="left:634px;top:324.5px" width="9" height="6" viewBox="0 0 9 6"><path d="M0.8 0.8 L4.5 4.6 L8.2 0.8" fill="none" stroke="#3a3f4a" stroke-width="1.3"/></svg>
<div class="a" style="left:658.8px;top:320.2px;width:55px;height:15.2px;border:1px solid #7d7d7d;border-radius:2px;background:#f3f3f3"></div>
<svg style="left:662px;top:322px" width="49" height="12" viewBox="0 0 49 12"><path d="M3 6 H44" stroke="#5b0f98" stroke-width="1.7"/><path d="M41 6 H47" stroke="#ff3a60" stroke-width="1.2"/><path d="M1 6 H5" stroke="#2a8cff" stroke-width="1.2"/><rect x="7" y="3.4" width="3" height="5.2" fill="#2a8cff"/><rect x="10" y="3" width="6" height="6" fill="#5b0f98"/><rect x="16" y="3.4" width="3.4" height="5.2" fill="#ff3a60"/><rect x="27" y="3.4" width="3" height="5.2" fill="#2a8cff"/><rect x="30" y="3" width="6" height="6" fill="#5b0f98"/><rect x="36" y="3.4" width="3.4" height="5.2" fill="#ff3a60"/></svg>
<div class="a" style="left:718.6px;top:324.6px;width:6.6px;height:6.4px;background:#9d9d9d"></div>
<div class="a" style="left:716.5px;top:320.5px;width:11px;height:15px;border:1px solid #e6e6e6"></div>
<div class="a" style="left:736px;top:320.2px;width:16.6px;height:15.2px;border:1px solid #777;border-radius:2px;background:#f3f3f3"></div>
<svg style="left:740.5px;top:323.5px" width="8" height="9" viewBox="0 0 8 9"><rect x="1.6" y="2" width="4.8" height="5.4" fill="#9a9a9a"/><path d="M0.4 1 H7.6 M4 1 V8 M2.4 8 H5.6" stroke="#5b0f98" stroke-width="1.5" fill="none"/></svg>
<div class="a" style="left:759.5px;top:320.5px;width:15.6px;height:15px;border:1px solid #e8e8e8"></div>
<svg style="left:761.5px;top:323.5px" width="12" height="9" viewBox="0 0 12 9"><rect x="3" y="2" width="6" height="5.4" fill="#b0b0b0"/><path d="M0.4 1 H5.6 M3 1 V8 M6.4 1 H11.6 M9 1 V8 M2 8 H4 M8 8 H10" stroke="#5b0f98" stroke-width="1.5" fill="none"/></svg>
<div class="a" style="left:789px;top:320.5px;width:15.6px;height:15px;border:1px solid #e8e8e8"></div>
<svg style="left:791px;top:322.5px" width="12" height="11" viewBox="0 0 12 11"><rect x="3.4" y="1.6" width="8" height="7.8" fill="#c9a6e0"/><path d="M0.4 5.5 H11.4" stroke="#6a1fa8" stroke-width="1"/><circle cx="8" cy="5.5" r="1.7" fill="#5b0f98"/></svg>
<div class="a" style="left:810.5px;top:320.5px;width:16.6px;height:15px;border:1px solid #e8e8e8"></div>
<svg style="left:812.4px;top:323.4px" width="13" height="9" viewBox="0 0 13 9"><rect x="0" y="0" width="13" height="9" fill="#b48ad2"/><rect x="0" y="0" width="3" height="9" fill="#5b0f98"/><rect x="10" y="0" width="3" height="9" fill="#5b0f98"/></svg>
<div class="a" style="left:841px;top:319.8px;width:16.4px;height:16px;border:1px solid #777;border-radius:2px;background:#fff;padding:1px"><div style="width:100%;height:100%;background:#fcc419;padding:3px"><div style="width:100%;height:100%;background:#5b0f98"></div></div></div>
<div class="a" style="left:863.6px;top:319.8px;width:16.4px;height:16px;border:1px solid #777;border-radius:2px;background:#fff;padding:1px"><div style="width:100%;height:100%;background:#ff3df2;padding:3px"><div style="width:100%;height:100%;background:#5b0f98"></div></div></div>
<div class="a" style="left:893.5px;top:320.5px;width:16px;height:15px;border:1px solid #e8e8e8"></div>
<svg style="left:898.5px;top:321px" width="7" height="14" viewBox="0 0 7 14"><path d="M3.5 0.4 V13.6" stroke="#1aa7e8" stroke-width="1.1"/><rect x="0.8" y="3" width="5.4" height="8" fill="#8fe3f5" stroke="#1aa7e8" stroke-width="1"/></svg>
<div class="tsel" style="left:917px;width:74px"></div>
<div class="t tt" style="left:923.5px;top:320.5px">2022 Декаб</div>
<svg style="left:395px;top:345px" width="224" height="38" viewBox="395 345 224 38"><path d="M399.6 365.6 H410" stroke="#222" stroke-width="1.7"/><path d="M600.6 365.7 H611.7 M606.15 360.2 V371.2" stroke="#222" stroke-width="1.35"/><path d="M415.5 365.5 H596" stroke="#d9d9d9" stroke-width="2.4"/><g stroke="#666" stroke-width="0.8"><path d="M415.5 363.8 V367.3"/><path d="M431.9 363.8 V367.3"/><path d="M448.3 363.8 V367.3"/><path d="M464.7 363.8 V367.3"/><path d="M481.1 363.8 V367.3"/><path d="M497.5 363.8 V367.3"/><path d="M513.9 363.8 V367.3"/><path d="M530.3 363.8 V367.3"/><path d="M546.7 363.8 V367.3"/><path d="M563.1 363.8 V367.3"/><path d="M579.5 363.8 V367.3"/><path d="M595.9 363.8 V367.3"/></g><path d="M543.3 357 H549.3 L546.9 360.3 V367.2 H545.7 V360.3 Z" fill="#444"/></svg>
<div class="t" style="left:415.2px;top:368.8px;font-size:9.7px;color:#444">дни</div>
<div class="t" style="left:492.2px;top:368.8px;font-size:9.8px;color:#444">часы</div>
<div class="t" style="left:574.5px;top:368.8px;font-size:9.8px;color:#444">мин.</div>
<div class="t tm" style="left:640.0px;top:359.8px">17:00</div>
<div class="a" style="left:654.0px;top:380px;width:1px;height:2px;background:#999"></div>
<div class="t tm" style="left:705.5px;top:359.8px">17:05</div>
<div class="a" style="left:719.5px;top:380px;width:1px;height:2px;background:#999"></div>
<div class="t tm" style="left:771.1px;top:359.8px">17:10</div>
<div class="a" style="left:785.1px;top:380px;width:1px;height:2px;background:#999"></div>
<div class="t tm" style="left:836.6px;top:359.8px">17:15</div>
<div class="a" style="left:850.6px;top:380px;width:1px;height:2px;background:#999"></div>
<div class="t tm" style="left:902.2px;top:359.8px">17:20</div>
<div class="a" style="left:916.2px;top:380px;width:1px;height:2px;background:#999"></div>
<div class="t tm" style="left:967.8px;top:359.8px">17:25</div>
<div class="a" style="left:981.8px;top:380px;width:1px;height:2px;background:#999"></div>
<div class="a" style="left:408px;top:396px;width:11.5px;height:12px;background:#1a87c9;border:1px solid #222"></div>
<div class="t" style="left:433px;top:395px;font-size:11.4px;color:#3a3f4a">Monterrey-Hidalgo</div>
<div class="a" style="left:654px;top:385px;width:40.5px;height:34.5px;background:#1a87c9"></div>
<div class="a" style="left:785px;top:385px;width:40.5px;height:17px;background:#f6f6f6;border:1px solid #4a9fd8;border-bottom:none"></div>
<div class="a" style="left:785px;top:418.6px;width:40.5px;height:1.2px;background:#4a9fd8"></div>
<div class="a" style="left:916px;top:385px;width:40.5px;height:17px;background:#f6f6f6;border:1px solid #4a9fd8;border-bottom:none"></div>
<div class="a" style="left:916px;top:418.6px;width:40.5px;height:1.2px;background:#4a9fd8"></div>
<div class="a" style="left:696px;top:402px;width:302px;height:15px;overflow:hidden"><div class="t" style="left:0;top:0;font-size:11.3px;color:#3a3f4a">2 Ignacio Zaragoza, Melchor Ocampo, Santiago, Nuevo León 67329</div></div>
<div class="a" style="left:683.6px;top:380px;width:1px;height:97px;background:#5b9bf0"></div>
<div class="a" style="left:680px;top:366px;width:8px;height:15.4px;background:#8fb8f8;border:1px solid #5b95ea;border-radius:1.5px"></div>

<!-- BOTTOM BAR -->
<div class="a" style="left:0;top:475.6px;width:391px;height:1px;background:#e3e3e3"></div>
<svg style="left:19px;top:486px" width="13" height="12" viewBox="0 0 13 12"><rect x="0.7" y="0.7" width="11.6" height="10.6" fill="#fff" stroke="#222b3a" stroke-width="1.4"/><rect x="0.7" y="0.7" width="4" height="10.6" fill="#222b3a"/></svg>
<svg style="left:48px;top:486px" width="11" height="11" viewBox="0 0 11 11" fill="#222b3a"><rect x="0" y="0" width="3" height="3"/><rect x="4" y="0" width="3" height="3"/><rect x="8" y="0" width="3" height="3"/><rect x="0" y="4" width="3" height="3"/><rect x="4" y="4" width="3" height="3"/><rect x="8" y="4" width="3" height="3"/><rect x="0" y="8" width="3" height="3"/><rect x="4" y="8" width="3" height="3"/><rect x="8" y="8" width="3" height="3"/></svg>
<div class="t" style="left:405px;top:484px;font-size:10.6px;color:#444">© Gurtam</div>
<svg style="left:799.8px;top:486.4px" width="13.6" height="11.2" viewBox="0 0 15 12"><rect x="0" y="0" width="15" height="12" fill="#b5b9c0"/><rect x="1" y="2.6" width="13" height="8.4" fill="#fff" opacity=".0"/><rect x="2.4" y="4.6" width="10" height="1.6" fill="#fff"/><rect x="2.4" y="7.6" width="6" height="1.6" fill="#fff"/><rect x="0" y="0" width="15" height="2.6" fill="#a3a7ae"/></svg>
<svg style="left:826px;top:487px" width="20" height="11" viewBox="0 0 20 11"><rect x="0" y="0" width="13" height="9.4" fill="#b5b9c0"/><path d="M0.4 0.6 L6.5 5.6 L12.6 0.6" fill="none" stroke="#fff" stroke-width="1.3"/><path d="M13 6.6 H19 M16.6 4.4 L19 6.6 L16.6 8.8" fill="none" stroke="#b5b9c0" stroke-width="1.4"/><path d="M9 6 L14 11" stroke="#fff" stroke-width="1.2"/></svg>
<svg style="left:858.8px;top:486.3px" width="13" height="11.4" viewBox="0 0 14 12"><rect x="0.6" y="0.6" width="12.8" height="10.8" fill="#fff" stroke="#b5b9c0" stroke-width="1.2"/><path d="M1.6 10.4 L5 6 L7.4 8.6 L9.6 6.6 L12.4 10.4 Z" fill="#b5b9c0"/><circle cx="4.2" cy="3.8" r="1.3" fill="#b5b9c0"/></svg>
<svg style="left:886px;top:486.5px" width="16" height="11" viewBox="0 0 16 11"><rect x="0" y="0" width="7" height="11" fill="#222b3a"/><rect x="8.6" y="0" width="7.4" height="11" fill="#222b3a"/><path d="M1.6 2.4 H5.4 M1.6 5.5 H5.4 M1.6 8.6 H4" stroke="#fff" stroke-width="1.2"/></svg>
<div class="t" style="left:915px;top:484px;font-size:11.4px;color:#3a3f4a">17:02:18 (+02)</div>

</div></div>

<!-- CALLOUT -->
<div id="callout">
<svg style="left:990px;top:360px" width="201" height="80" viewBox="990 360 201 80">
  <path d="M1003.8 395.9 H1034" stroke="#fff" stroke-width="3.9"/>
  <circle cx="999.3" cy="395.8" r="4.3" fill="#fff"/>
  <rect x="1031" y="369.6" width="159.4" height="60.7" rx="5.6" fill="#fff"/>
  <rect x="1032.8" y="371.3" width="155.9" height="57.3" rx="4.2" fill="#0b1f48"/>
  <path d="M999.3 395.9 H1034" stroke="#0b1f48" stroke-width="1.8"/>
  <circle cx="999.3" cy="395.8" r="3.2" fill="#0b1f48"/>
</svg>
<div class="t" style="left:1032px;top:381.5px;width:158px;text-align:center;font-size:16px;line-height:19px;color:#fff;white-space:normal">Временная шкала<br>с рейсами</div>
</div>
</div>
</body>
</html>
